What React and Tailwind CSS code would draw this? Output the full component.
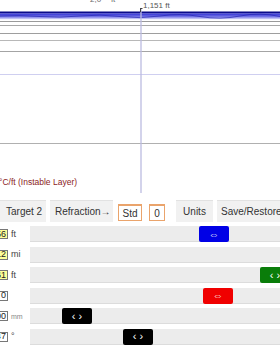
import React from "react";

function Diagram() {
  return (
    <svg width="280" height="197" viewBox="0 0 280 197" className="block">
      <defs>
        <linearGradient id="band" x1="0" y1="0" x2="0" y2="1">
          <stop offset="0" stopColor="#3030d4" />
          <stop offset="0.5" stopColor="#7070e6" />
          <stop offset="1" stopColor="#e6e6fb" />
        </linearGradient>
      </defs>
      <text x="90" y="2" fontSize="8" fill="#666" fontFamily="Liberation Sans, Arial, sans-serif">2,0 ·· ft</text>
      <text x="143" y="8" fontSize="8" fill="#555" fontFamily="Liberation Sans, Arial, sans-serif">1,151 ft</text>
      <rect x="0" y="11.5" width="280" height="2" fill="#0a0a8a" />
      <rect x="0" y="13.5" width="280" height="6" fill="url(#band)" />
      <path d="M0 16 Q20 15 40 16.5 T80 16 T120 16.5 T160 16 T200 16.5 T240 16 T280 16.5" stroke="#2424b0" strokeWidth="0.7" fill="none" />
      <line x1="0" y1="21.5" x2="280" y2="21.5" stroke="#9a9a9a" strokeWidth="1" />
      <line x1="0" y1="25.5" x2="280" y2="25.5" stroke="#a8a8a8" strokeWidth="1" />
      <line x1="0" y1="33.5" x2="280" y2="33.5" stroke="#9e9e9e" strokeWidth="1" />
      <line x1="0" y1="40.5" x2="280" y2="40.5" stroke="#b8b8b8" strokeWidth="1" />
      <line x1="0" y1="51.5" x2="280" y2="51.5" stroke="#a4a4a4" strokeWidth="1" />
      <line x1="0" y1="74.5" x2="280" y2="74.5" stroke="#cfcff0" strokeWidth="1" />
      <line x1="0" y1="143.5" x2="280" y2="143.5" stroke="#b0b0b0" strokeWidth="1" />
      <line x1="141" y1="8" x2="141" y2="193" stroke="#bcbce0" strokeWidth="1.3" />
      <line x1="140.5" y1="8" x2="140.5" y2="12" stroke="#444" strokeWidth="1" />
      <line x1="140.5" y1="8.5" x2="142.5" y2="8.5" stroke="#444" strokeWidth="1" />
      <text x="-1" y="185" fontSize="8.5" fill="#8b2323" fontFamily="Liberation Sans, Arial, sans-serif">°C/ft (Instable Layer)</text>
    </svg>
  );
}

const rows = [
  { v: "56", unit: "ft", yellow: true, handle: { left: 169, bg: "bg-[#0000e6]", g: "⇔" } },
  { v: "12", unit: "mi", yellow: true, handle: null },
  { v: "61", unit: "ft", yellow: true, handle: { left: 230, bg: "bg-[#0a7d0a]", g: "‹ ›" } },
  { v: "0", unit: "", yellow: false, handle: { left: 173, bg: "bg-[#f00000]", g: "⇔" } },
  { v: "00", unit: "mm", small: true, yellow: false, handle: { left: 32, bg: "bg-black", g: "‹ ›" } },
  { v: "47", unit: "°", yellow: false, handle: { left: 93, bg: "bg-black", g: "‹ ›" } },
];

export default function App() {
  return (
    <div
      className="w-[280px] h-[350px] overflow-hidden bg-white relative"
      style={{ fontFamily: "'Liberation Sans', Arial, sans-serif" }}
    >
      <Diagram />
      <div className="flex items-end h-[25px] text-[10px] text-[#333]">
        <div className="w-[46px] h-[22px] bg-[#f1f1f1] border-t border-[#e2e2e2] flex items-center pl-[6px]">Target 2</div>
        <div className="ml-[4px] w-[63px] h-[22px] bg-[#f1f1f1] border-t border-[#e2e2e2] flex items-center pl-[5px] whitespace-nowrap">Refraction→</div>
        <div className="ml-[5px] w-[24px] h-[17px] border border-[#eaa46c] border-t-2 flex items-center justify-center mb-[1px]">Std</div>
        <div className="ml-[7px] w-[16px] h-[17px] border border-[#eaa46c] border-t-2 flex items-center justify-center mb-[1px]">0</div>
        <div className="ml-[11px] w-[37px] h-[22px] bg-[#f1f1f1] border-t border-[#e2e2e2] flex items-center justify-center">Units</div>
        <div className="ml-[4px] flex-1 h-[22px] bg-[#f1f1f1] border-t border-[#e2e2e2] flex items-center pl-[4px] whitespace-nowrap overflow-hidden">Save/Restore</div>
      </div>
      <div className="flex flex-col gap-[4.5px] pt-[4px]">
        {rows.map((r, i) => (
          <div key={i} className="flex items-center h-[16px]">
            <div className="w-[30px] flex items-center shrink-0">
              <div
                className={
                  "ml-[-12px] w-[20px] h-[10px] border border-[#777] flex items-center justify-end pr-[1px] text-[9px] leading-none text-[#222] " +
                  (r.yellow ? "bg-[#ffff99]" : "bg-white")
                }
              >
                {r.v}
              </div>
              <span className={r.small ? "ml-[3px] text-[7px] text-[#888] leading-none" : "ml-[3px] text-[9px] text-[#444] leading-none"}>{r.unit}</span>
            </div>
            <div className="relative flex-1 h-[16px] bg-[#ececec] border-b border-[#dcdcdc]">
              {r.handle && (
                <div
                  className={"absolute top-0 h-[16px] w-[30px] rounded-[2px] flex items-center justify-center text-white text-[11px] leading-none " + r.handle.bg}
                  style={{ left: r.handle.left }}
                >
                  {r.handle.g}
                </div>
              )}
            </div>
          </div>
        ))}
      </div>
    </div>
  );
}
